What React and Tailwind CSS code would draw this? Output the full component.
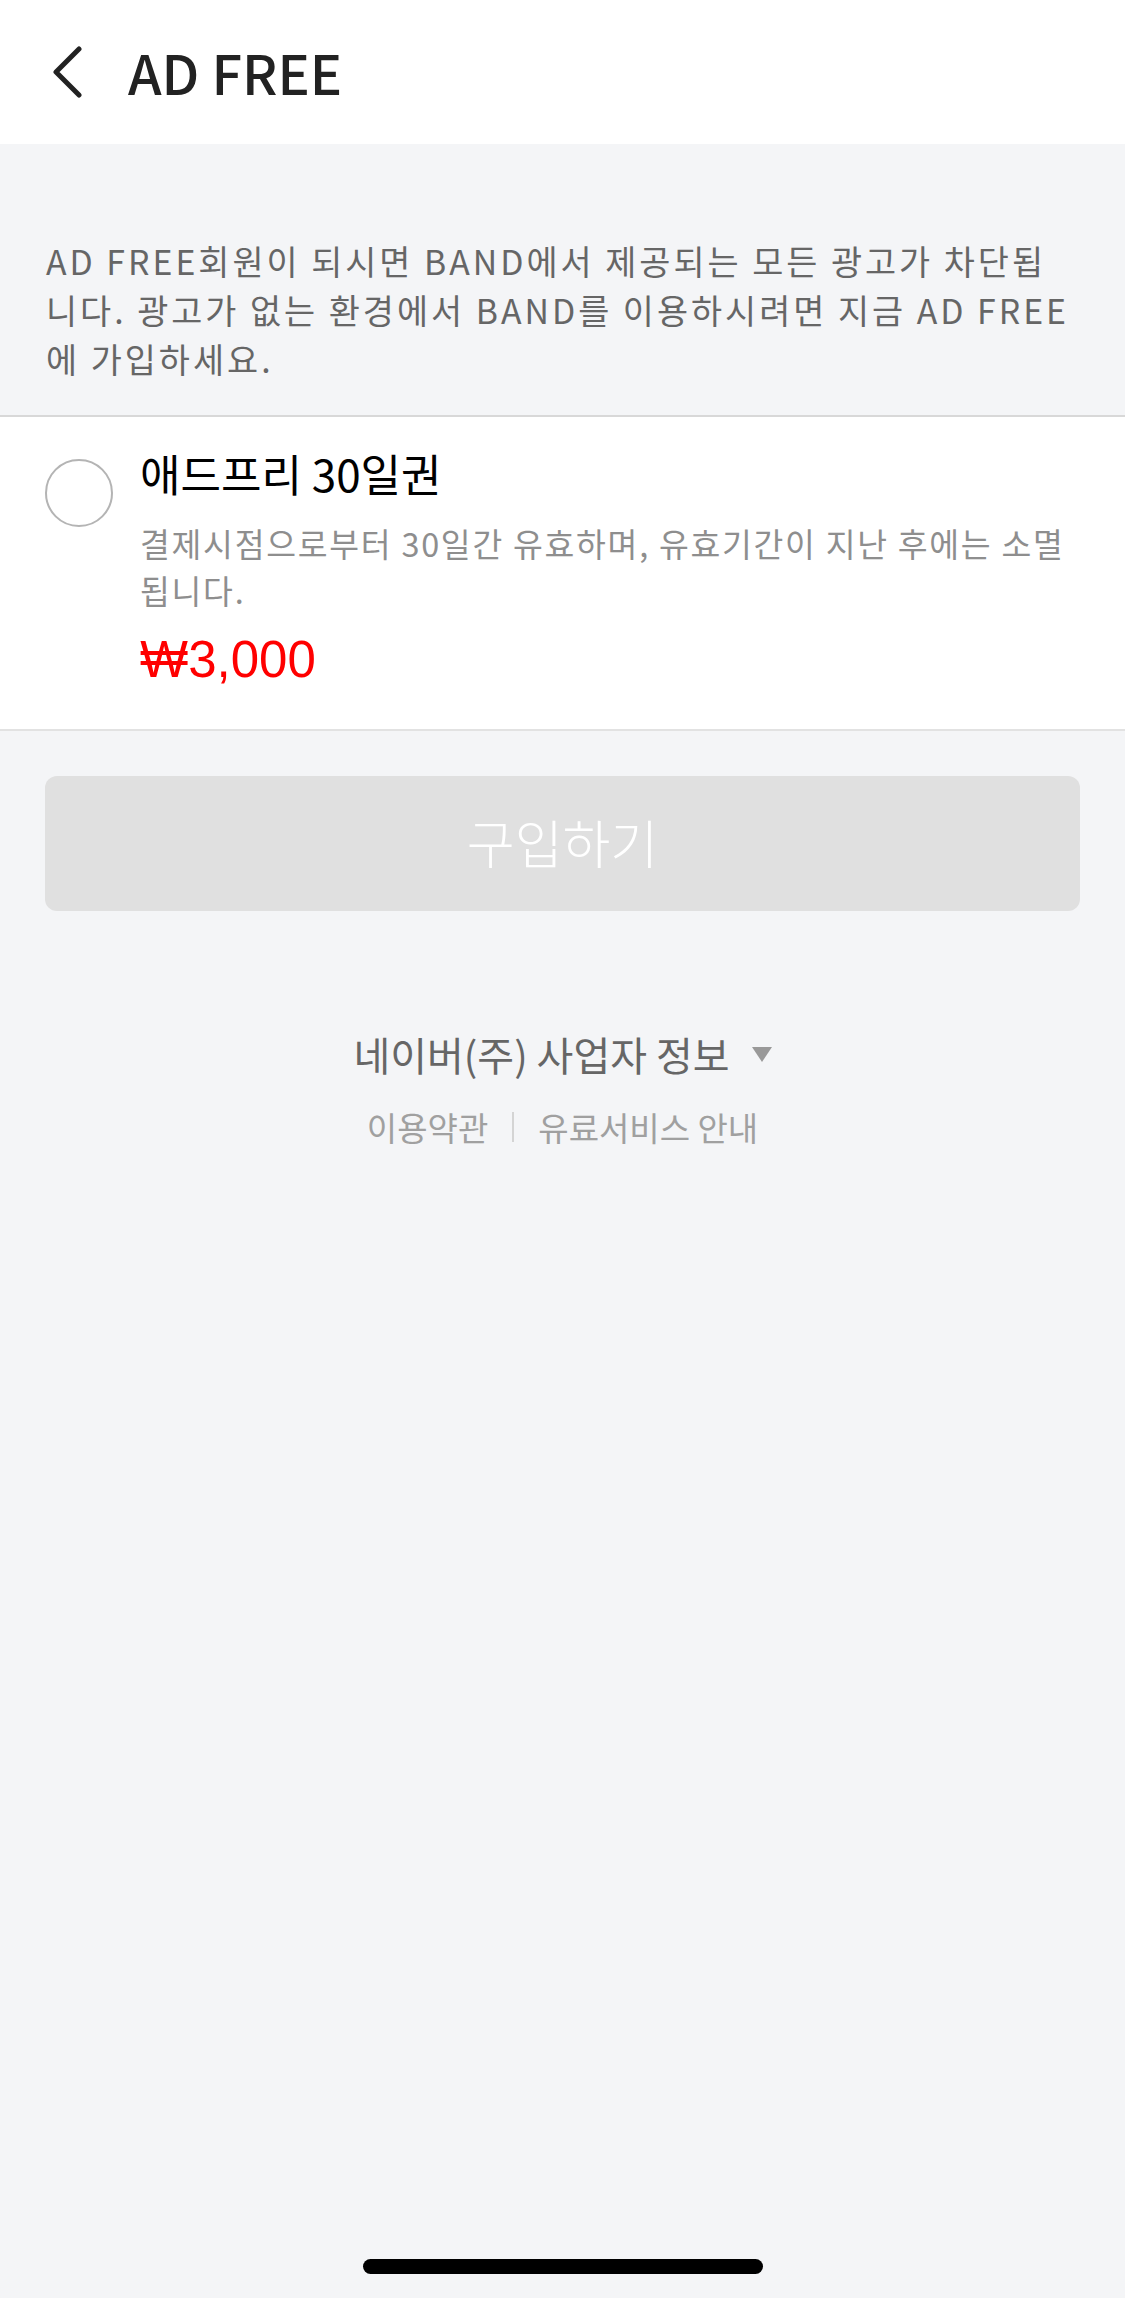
export default function App() {
  const kr = { fontFamily: '"Noto Sans CJK KR", "Noto Sans", sans-serif' };
  return (
    <div className="min-h-[2298px] w-[1125px] flex flex-col bg-[#f4f5f7]" style={kr}>
      {/* Header */}
      <div className="h-[144px] bg-white flex items-center">
        <svg className="ml-[52px] w-[30px] h-[56px]" viewBox="0 0 30 56" fill="none">
          <polyline points="27,5 4,28 27,51" stroke="#222" strokeWidth="5" strokeLinecap="round" strokeLinejoin="round" />
        </svg>
        <div className="ml-[46px] text-[54px] leading-[60px] font-medium text-[#222]">AD FREE</div>
      </div>

      {/* Description */}
      <div className="pt-[92px] pb-[32px] px-[46px] text-[33.8px] tracking-[3px] leading-[49px] text-[#666666]">
        <span className="block whitespace-nowrap">AD FREE회원이 되시면 BAND에서 제공되는 모든 광고가 차단됩</span>
        <span className="block whitespace-nowrap">니다. 광고가 없는 환경에서 BAND를 이용하시려면 지금 AD FREE</span>
        <span className="block whitespace-nowrap">에 가입하세요.</span>
      </div>

      {/* Option */}
      <div className="bg-white border-t-2 border-b-2 border-t-[#d8d8d8] border-b-[#e2e2e2] pt-[31px] pb-[39px] pl-[45px] flex items-start">
        <div className="mt-[11px] w-[68px] h-[68px] rounded-full border-2 border-[#b4b4b4] shrink-0" />
        <div className="ml-[27px] flex flex-col">
          <div className="text-[44px] leading-[50px] text-black">애드프리 30일권</div>
          <div className="mt-[21px] text-[32.4px] tracking-[1.75px] leading-[47px] text-[#8e8e8e]">
            <span className="block whitespace-nowrap">결제시점으로부터 30일간 유효하며, 유효기간이 지난 후에는 소멸</span>
            <span className="block whitespace-nowrap">됩니다.</span>
          </div>
          <div
            className="mt-[17px] text-[51px] leading-[60px] text-[#ff0000]"
            style={{ fontFamily: '"Liberation Sans", "Noto Sans CJK KR", sans-serif' }}
          >
            ₩3,000
          </div>
        </div>
      </div>

      {/* Button */}
      <div className="mt-[45px] mx-[45px] h-[135px] rounded-[12px] bg-[#e0e0e0] flex items-center justify-center">
        <span className="text-[52px] leading-[60px] font-light text-white -mt-[4px]">구입하기</span>
      </div>

      {/* Footer */}
      <div className="mt-[119px] flex flex-col items-center">
        <div className="flex items-center">
          <span className="text-[40px] leading-[48px] text-[#666666]">네이버(주) 사업자 정보</span>
          <svg className="ml-[22px] w-[20px] h-[15px]" viewBox="0 0 20 15">
            <polygon points="0,0 20,0 10,15" fill="#999999" />
          </svg>
        </div>
        <div className="mt-[28px] flex items-center text-[33px] leading-[42px] text-[#a0a0a0]">
          <span>이용약관</span>
          <span className="mx-[24px] w-[2px] h-[30px] bg-[#d4d4d4]" />
          <span>유료서비스 안내</span>
        </div>
      </div>

      <div className="flex-1" />

      {/* Home indicator */}
      <div className="mb-[24px] flex justify-center">
        <div className="w-[400px] h-[15px] rounded-full bg-black" />
      </div>
    </div>
  );
}
